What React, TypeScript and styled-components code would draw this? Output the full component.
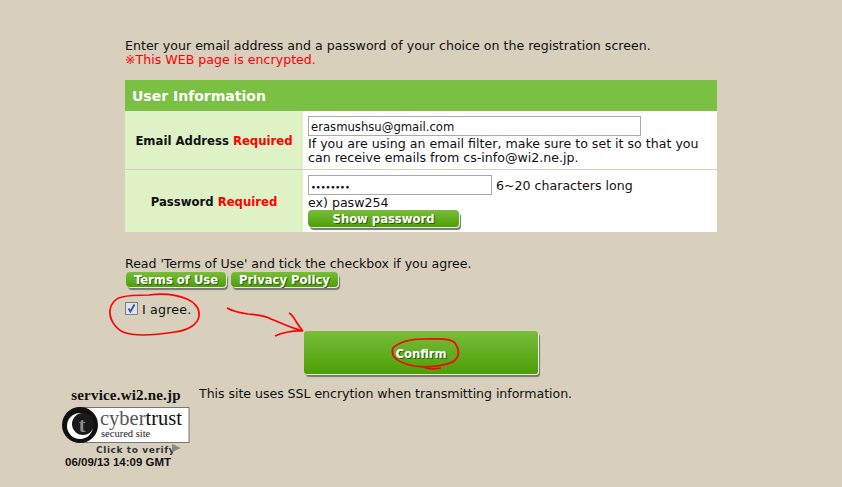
import styled, { createGlobalStyle } from 'styled-components';

const GlobalStyle = createGlobalStyle`
  html, body {
    margin: 0;
    padding: 0;
    background: #d8cfbc;
  }
  body {
    font-family: 'DejaVu Sans', Verdana, sans-serif;
    font-size: 12.6px;
    color: #111;
    line-height: 14px;
  }
`;

const Page = styled.div`
  position: relative;
  width: 842px;
  height: 487px;
  overflow: hidden;
  padding: 39px 0 0 62px;
  box-sizing: border-box;
`;

const Main = styled.div`
  width: 592px;
  margin-left: 63px;
`;

const Intro = styled.p`
  margin: 0 0 13px;
  white-space: nowrap;
`;

const Notice = styled.span`
  display: block;
  color: #ff0000;
`;

const FormTable = styled.div`
  display: grid;
  grid-template-columns: 178px 414px;
  background: #fff;
`;

const TableHead = styled.div`
  grid-column: 1 / 3;
  height: 30px;
  padding: 1px 0 0 7px;
  line-height: 31px;
  background: #7ac143;
  color: #fff;
  font-size: 14px;
  font-weight: bold;
`;

const Label = styled.div<{ $last?: boolean }>`
  display: flex;
  align-items: center;
  justify-content: center;
  gap: 4px;
  padding-top: 2px;
  background: #def2c6;
  font-weight: bold;
  font-size: 11.7px;
  border-bottom: ${p => (p.$last ? 'none' : '1px solid #d8cfbc')};
`;

const Required = styled.span`
  color: #ff0000;
`;

const Field = styled.div<{ $last?: boolean }>`
  padding: 5px 0 0 5px;
  height: ${p => (p.$last ? '57px' : '53px')};
  border-bottom: ${p => (p.$last ? 'none' : '1px solid #d8cfbc')};
`;

const TextBox = styled.div<{ $width: number }>`
  box-sizing: border-box;
  width: ${p => p.$width}px;
  height: 20px;
  margin-bottom: 1px;
  padding: 2px 0 0 2px;
  line-height: 16px;
  font-size: 11.65px;
  background: #fff;
  border: 1px solid #aaa;
`;

const Hint = styled.div`
  white-space: nowrap;
`;

const PasswordRow = styled.div`
  display: flex;
  align-items: center;
  gap: 4px;
`;

const Dots = styled.span`
  font-size: 7.6px;
  font-weight: bold;
`;

const GreenButton = styled.button<{ $width: number; $height?: number }>`
  display: block;
  box-sizing: border-box;
  width: ${p => p.$width}px;
  height: ${p => p.$height ?? 18}px;
  padding: 0;
  border: none;
  border-radius: 4px;
  background: linear-gradient(#79bd3b, #4c9f06);
  box-shadow: 1px 1px 0 #eeeade, 2px 3px 1px #777;
  color: #fff;
  font-family: inherit;
  font-size: 11.6px;
  font-weight: bold;
  line-height: 14px;
  text-shadow: 1px 1px 0 #2f5f08;
`;

const ShowButton = styled(GreenButton)`
  padding-top: 1px;
`;

const Terms = styled.div`
  margin-top: 25px;
  letter-spacing: -0.05px;
`;

const TermsButtons = styled.div`
  display: flex;
  gap: 5px;
  margin: 1px 0 0 1px;
`;

const AgreeRow = styled.div`
  display: flex;
  align-items: flex-start;
  gap: 4px;
  height: 15px;
  margin-top: 15px;
`;

const AgreeText = styled.span`
  padding-top: 1px;
  letter-spacing: 0.2px;
`;

const CheckBox = styled.span`
  display: flex;
  width: 13px;
  height: 13px;
  box-sizing: border-box;
  border: 1px solid #7d7d86;
  background: #dfe3ee;
`;

const ConfirmWrap = styled.div`
  margin: 14px 0 0 179px;
`;

const ConfirmButton = styled(GreenButton)`
  padding-top: 2px;
  border-radius: 3px;
`;

const Footer = styled.div`
  display: flex;
  gap: 9px;
  margin-top: 12px;
`;

const SiteNote = styled.div`
  margin-top: 1px;
  letter-spacing: -0.05px;
`;

const Seal = styled.div`
  width: 128px;
  text-align: center;
`;

const SealHost = styled.div`
  font-family: 'Liberation Serif', serif;
  font-weight: bold;
  font-size: 15px;
  letter-spacing: 0.2px;
  line-height: 19px;
  padding-bottom: 2px;
  white-space: nowrap;
`;

const SealDate = styled.div`
  font-family: 'Liberation Sans', sans-serif;
  font-size: 11.5px;
  font-weight: bold;
  line-height: 12px;
  margin: -1px 0 0 3px;
  white-space: nowrap;
  text-align: left;
`;

const Overlay = styled.svg`
  position: absolute;
  left: 0;
  top: 0;
  pointer-events: none;
`;

function SealBadge() {
  return (
    <svg width="128" height="50" viewBox="0 0 128 50" style={{ display: 'block' }}>
      <rect x="16" y="0.5" width="111" height="35" fill="#fff" stroke="#777" />
      <circle cx="18" cy="18" r="18" fill="#111" />
      <circle cx="18" cy="19" r="13" fill="#fff" />
      <circle cx="21" cy="17" r="11" fill="#1a1a1a" />
      <text x="20" y="25" textAnchor="middle" fontFamily="Liberation Serif" fontSize="20" fontWeight="bold" fill="#8a8a8a">t</text>
      <text x="38" y="18" fontFamily="Liberation Serif" fontSize="20.5" fill="#555">cyber<tspan fill="#111">trust</tspan></text>
      <text x="39" y="30" fontFamily="Liberation Serif" fontSize="10.5" fill="#222">secured site</text>
      <text x="34" y="46" fontFamily="DejaVu Sans" fontSize="9" fontWeight="bold" letterSpacing="0.6" fill="#333">Click to verify</text>
      <path d="M110 37l9 4-9 4z" fill="#888" />
    </svg>
  );
}

export default function App() {
  return (
    <Page>
      <GlobalStyle />
      <Main>
        <Intro>
          Enter your email address and a password of your choice on the registration screen.
          <Notice>※This WEB page is encrypted.</Notice>
        </Intro>

        <FormTable>
          <TableHead>User Information</TableHead>
          <Label>Email Address <Required>Required</Required></Label>
          <Field>
            <TextBox $width={333}>erasmushsu@gmail.com</TextBox>
            <Hint>If you are using an email filter, make sure to set it so that you</Hint>
            <Hint>can receive emails from cs-info@wi2.ne.jp.</Hint>
          </Field>
          <Label $last>Password <Required>Required</Required></Label>
          <Field $last>
            <PasswordRow>
              <TextBox $width={184}><Dots>••••••••</Dots></TextBox>
              6~20 characters long
            </PasswordRow>
            <Hint>ex) pasw254</Hint>
            <ShowButton $width={151} $height={17}>Show password</ShowButton>
          </Field>
        </FormTable>

        <Terms>Read 'Terms of Use' and tick the checkbox if you agree.</Terms>
        <TermsButtons>
          <GreenButton $width={100} $height={15}>Terms of Use</GreenButton>
          <GreenButton $width={107} $height={15}>Privacy Policy</GreenButton>
        </TermsButtons>

        <AgreeRow>
          <CheckBox>
            <svg width="11" height="11" viewBox="0 0 11 11">
              <path d="M2.5 5.5l2 3 4-7" fill="none" stroke="#3a4fa8" strokeWidth="1.8" />
            </svg>
          </CheckBox>
          <AgreeText>I agree.</AgreeText>
        </AgreeRow>

        <ConfirmWrap>
          <ConfirmButton $width={234} $height={43}>Confirm</ConfirmButton>
        </ConfirmWrap>
      </Main>

      <Footer>
        <Seal>
          <SealHost>service.wi2.ne.jp</SealHost>
          <SealBadge />
          <SealDate>06/09/13 14:09 GMT</SealDate>
        </Seal>
        <SiteNote>This site uses SSL encrytion when transmitting information.</SiteNote>
      </Footer>

      <Overlay width="842" height="487" viewBox="0 0 842 487" fill="none" stroke="#f00" strokeWidth="1.7">
        <path d="M122 297c-6 1-11 6-12 13-1 9 5 18 13 22 12 5 33 3 52 0 14-2 23-8 24-16 1-8-5-14-12-17-12-5-24-6-38-4-9 0-19 0-27 2z" />
        <path d="M227 308c7 4 14 5 21 6 9 1 16 1 23 5 10 4 20 9 32 12-9-1-22 2-28 5" />
        <path d="M289 313c4 2 6 7 8 10 2 3 4 6 6 8" />
        <path d="M393 348c6-6 18-9 32-9 12 0 26-1 30 4 4 6 5 13-1 18-8 5-28 7-40 5-9-2-19-6-21-11-1-3-1-5 0-7zM425 368c5 1 11 1 16 0" />
      </Overlay>
    </Page>
  );
}
